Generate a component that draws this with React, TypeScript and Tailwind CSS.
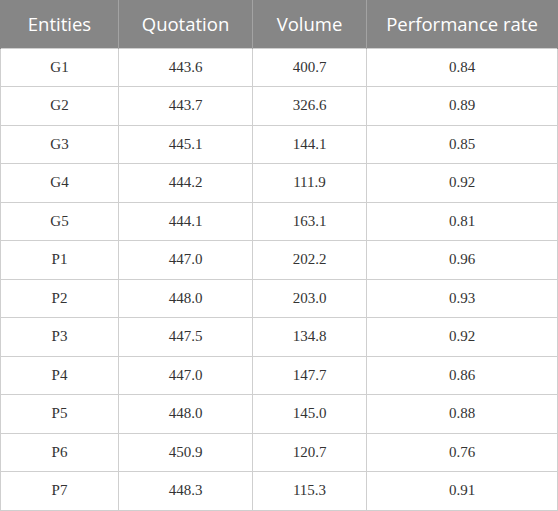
const rows = [
  ['G1', '443.6', '400.7', '0.84'],
  ['G2', '443.7', '326.6', '0.89'],
  ['G3', '445.1', '144.1', '0.85'],
  ['G4', '444.2', '111.9', '0.92'],
  ['G5', '444.1', '163.1', '0.81'],
  ['P1', '447.0', '202.2', '0.96'],
  ['P2', '448.0', '203.0', '0.93'],
  ['P3', '447.5', '134.8', '0.92'],
  ['P4', '447.0', '147.7', '0.86'],
  ['P5', '448.0', '145.0', '0.88'],
  ['P6', '450.9', '120.7', '0.76'],
  ['P7', '448.3', '115.3', '0.91'],
]

const headers = ['Entities', 'Quotation', 'Volume', 'Performance rate']

export default function App() {
  return (
    <div className="w-[558px] h-[511px] bg-white">
      <table className="w-[557px] border-collapse table-fixed">
        <colgroup>
          <col className="w-[118px]" />
          <col className="w-[134px]" />
          <col className="w-[114px]" />
          <col className="w-[191px]" />
        </colgroup>
        <thead>
          <tr className="h-[48px] bg-[#868686]">
            {headers.map((h) => (
              <th
                key={h}
                className="border-x border-[#a3a3a3] first:border-l-[#868686] last:border-r-[#868686] text-center font-normal text-white text-[18.5px] [font-family:'Open_Sans',sans-serif]"
              >
                {h}
              </th>
            ))}
          </tr>
        </thead>
        <tbody>
          {rows.map((r, i) => (
            <tr key={r[0]} className={i % 2 === 0 ? 'h-[38px]' : 'h-[39px]'}>
              {r.map((c, j) => (
                <td
                  key={j}
                  className="border border-[#cfcfcf] text-center text-[15px] text-[#333] [font-family:'Liberation_Serif',serif]"
                >
                  {c}
                </td>
              ))}
            </tr>
          ))}
        </tbody>
      </table>
    </div>
  )
}
